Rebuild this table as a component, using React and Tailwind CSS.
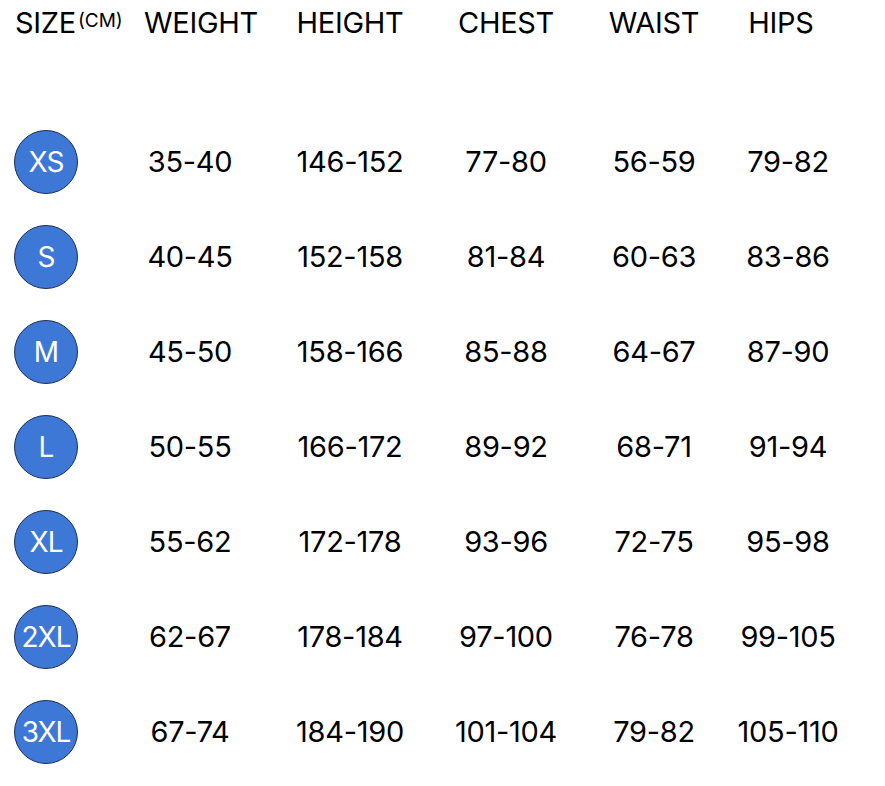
const rows = [
  { size: "XS", weight: "35-40", height: "146-152", chest: "77-80", waist: "56-59", hips: "79-82" },
  { size: "S", weight: "40-45", height: "152-158", chest: "81-84", waist: "60-63", hips: "83-86" },
  { size: "M", weight: "45-50", height: "158-166", chest: "85-88", waist: "64-67", hips: "87-90" },
  { size: "L", weight: "50-55", height: "166-172", chest: "89-92", waist: "68-71", hips: "91-94" },
  { size: "XL", weight: "55-62", height: "172-178", chest: "93-96", waist: "72-75", hips: "95-98" },
  { size: "2XL", weight: "62-67", height: "178-184", chest: "97-100", waist: "76-78", hips: "99-105" },
  { size: "3XL", weight: "67-74", height: "184-190", chest: "101-104", waist: "79-82", hips: "105-110" }
];

const cols = "grid grid-cols-[110px_160px_160px_152px_144px_124px]";

export default function App() {
  return (
    <div className="w-[885px] h-[786px] bg-white text-black font-['Inter','Liberation_Sans',sans-serif] overflow-hidden">
      <div className={`${cols} h-[44px] items-center text-[29px] leading-none tracking-[-0.3px]`}>
        <div className="pl-[15px] flex items-start whitespace-nowrap">
          <span>SIZE</span>
          <span className="text-[19px] mt-[3px] ml-[2px] tracking-normal">(CM)</span>
        </div>
        <div className="text-center pl-[22px]">WEIGHT</div>
        <div className="text-center">HEIGHT</div>
        <div className="text-center">CHEST</div>
        <div className="text-center">WAIST</div>
        <div className="text-center pr-[14px]">HIPS</div>
      </div>
      <div className="mt-[70px]">
        {rows.map((r) => (
          <div key={r.size} className={`${cols} h-[95px] items-center text-[29px] leading-none font-[430] tracking-[-0.3px]`}>
            <div className="pl-[14px]">
              <div className="w-[64px] h-[64px] rounded-full bg-[#3d78d6] border border-[#1c2e52] flex items-center justify-center text-white text-[28px] font-normal tracking-[-1px]">
                {r.size}
              </div>
            </div>
            <div className="text-center">{r.weight}</div>
            <div className="text-center">{r.height}</div>
            <div className="text-center">{r.chest}</div>
            <div className="text-center">{r.waist}</div>
            <div className="text-center">{r.hips}</div>
          </div>
        ))}
      </div>
    </div>
  );
}
